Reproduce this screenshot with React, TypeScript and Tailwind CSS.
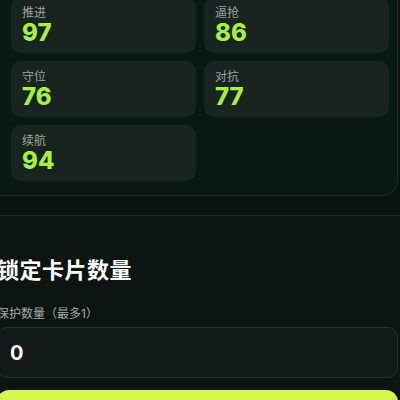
import React from 'react'

const stats = [
  { label: '推进', value: 97 },
  { label: '逼抢', value: 86 },
  { label: '守位', value: 76 },
  { label: '对抗', value: 77 },
  { label: '续航', value: 94 },
]

function StatCard({ label, value }: { label: string; value: number }) {
  return (
    <div className="h-[56px] rounded-[10px] bg-[#18241f] px-[11px] pt-[8px]">
      <div className="text-[12px] leading-4 text-[#9aa39f]">{label}</div>
      <div className="text-[24px] leading-[24px] font-extrabold text-[#a8ef3f]">{value}</div>
    </div>
  )
}

export default function App() {
  return (
    <div
      className="w-[400px] h-[400px] overflow-hidden bg-[#0b130f]"
      style={{ fontFamily: 'Inter, "Noto Sans CJK SC", sans-serif' }}
    >
      {/* stats panel */}
      <div className="mt-[-3px] ml-[-20px] mr-[2px] rounded-b-2xl border border-t-0 border-[#1f2a26] bg-[#0a1814] pl-[30px] pr-[8px] pb-[14px]">
        <div className="grid grid-cols-2 gap-2">
          {stats.map((s) => (
            <StatCard key={s.label} label={s.label} value={s.value} />
          ))}
        </div>
      </div>

      {/* lock section */}
      <div className="mt-[19px] ml-[-20px] mr-[-14px] border-t border-[#1f2a26] bg-[#0c1511] pl-[17px] pr-[16px] pt-[40px] pb-6">
        <h2 className="text-[22px] leading-[28px] font-bold tracking-[0.5px] text-white">锁定卡片数量</h2>
        <div className="mt-[22px] text-[12px] leading-[16px] text-[#a3aaa7]">保护数量（最多1）</div>
        <div className="mt-[5px] flex h-[51px] items-center rounded-[10px] border border-[#27302c] bg-[#111a16] px-3">
          <span className="text-[20px] font-bold text-white">0</span>
        </div>
        <button className="mt-3 h-[52px] w-full rounded-xl bg-[#d6f74a]"></button>
      </div>
    </div>
  )
}
